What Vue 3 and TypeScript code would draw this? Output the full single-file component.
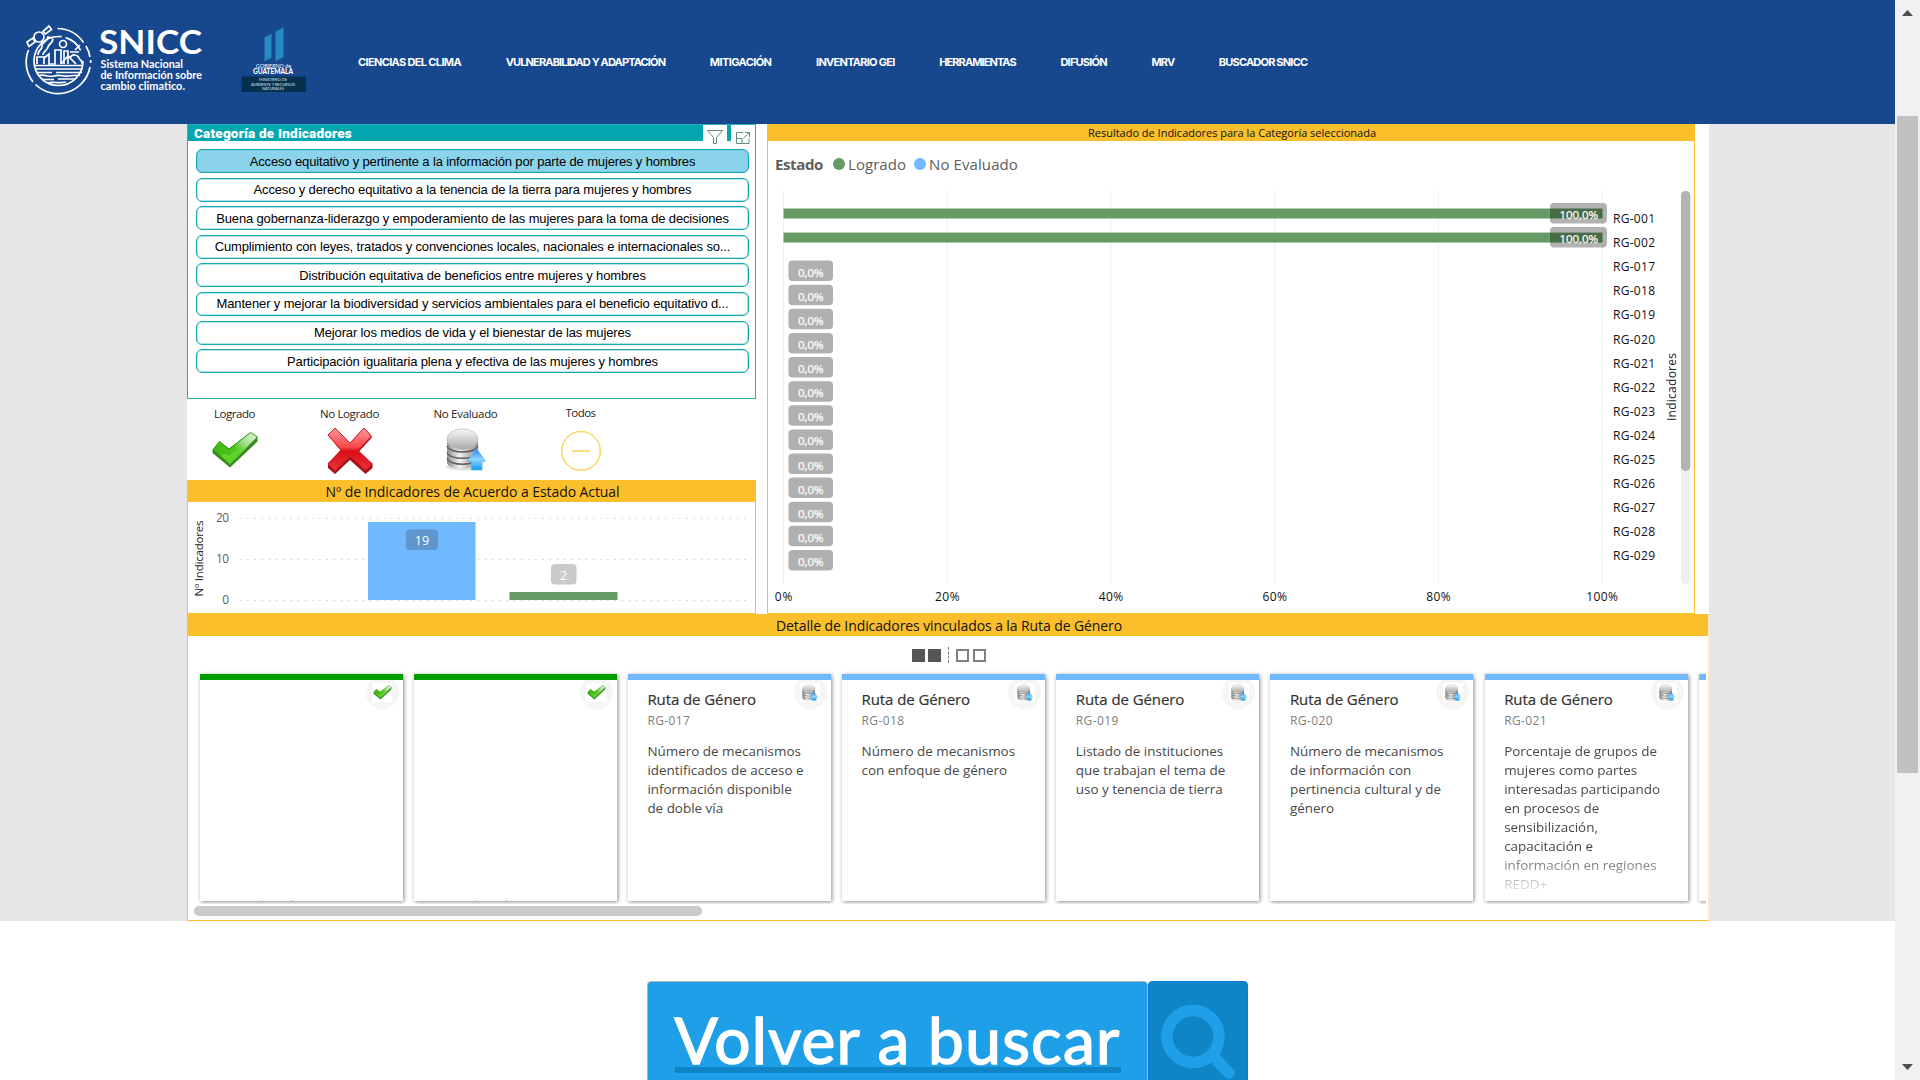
<script setup lang="ts">
interface NavItem { label: string; width: number }
interface Category { label: string; width: number; selected?: boolean }
interface Card { code?: string; lines: string[]; done?: boolean; fade?: boolean }

// Spreads or tightens the letters so that a label fills the given width.
const vFit = {
  mounted(el: HTMLElement, binding: { value: number }) {
    const natural = el.getBoundingClientRect().width
    const count = (el.textContent ?? '').trim().length
    if (binding.value && count) {
      el.style.letterSpacing = ((binding.value - natural) / count).toFixed(3) + 'px'
    }
  },
}

const nav: NavItem[] = [
  { label: 'CIENCIAS DEL CLIMA', width: 103 },
  { label: 'VULNERABILIDAD Y ADAPTACIÓN', width: 159.5 },
  { label: 'MITIGACIÓN', width: 61.5 },
  { label: 'INVENTARIO GEI', width: 78.5 },
  { label: 'HERRAMIENTAS', width: 76.5 },
  { label: 'DIFUSIÓN', width: 46.5 },
  { label: 'MRV', width: 22.5 },
  { label: 'BUSCADOR SNICC', width: 88.5 },
]

const categories: Category[] = [
  { label: 'Acceso equitativo y pertinente a la información por parte de mujeres y hombres', width: 445.5, selected: true },
  { label: 'Acceso y derecho equitativo a la tenencia de la tierra para mujeres y hombres', width: 438 },
  { label: 'Buena gobernanza-liderazgo y empoderamiento de las mujeres para la toma de decisiones', width: 512.5 },
  { label: 'Cumplimiento con leyes, tratados y convenciones locales, nacionales e internacionales so...', width: 515.5 },
  { label: 'Distribución equitativa de beneficios entre mujeres y hombres', width: 346.5 },
  { label: 'Mantener y mejorar la biodiversidad y servicios ambientales para el beneficio equitativo d...', width: 512 },
  { label: 'Mejorar los medios de vida y el bienestar de las mujeres', width: 317 },
  { label: 'Participación igualitaria plena y efectiva de las mujeres y hombres', width: 371 },
]

const indicators = ['001', '002', '017', '018', '019', '020', '021', '022', '023', '024', '025', '026', '027', '028', '029']
const ticks = [0, 20, 40, 60, 80, 100]
const tickX = (t: number) => 15.6 + t * 8.185

const cards: Card[] = [
  { done: true, lines: [] },
  { done: true, lines: [] },
  { code: 'RG-017', lines: ['Número de mecanismos', 'identificados de acceso e', 'información disponible', 'de doble vía'] },
  { code: 'RG-018', lines: ['Número de mecanismos', 'con enfoque de género'] },
  { code: 'RG-019', lines: ['Listado de instituciones', 'que trabajan el tema de', 'uso y tenencia de tierra'] },
  { code: 'RG-020', lines: ['Número de mecanismos', 'de información con', 'pertinencia cultural y de', 'género'] },
  { code: 'RG-021', fade: true, lines: ['Porcentaje de grupos de', 'mujeres como partes', 'interesadas participando', 'en procesos de', 'sensibilización,', 'capacitación e', 'información en regiones', 'REDD+'] },
  { lines: [] },
]
</script>

<template>
  <div class="page">
    <svg class="defs" width="0" height="0" aria-hidden="true">
      <defs>
        <linearGradient id="gGreen" x1="1" y1="0" x2="0" y2="0.6">
          <stop offset="0" stop-color="#eefbe8" /><stop offset="0.35" stop-color="#a4dd8c" />
          <stop offset="0.6" stop-color="#4cc41e" /><stop offset="1" stop-color="#3db80f" />
        </linearGradient>
        <linearGradient id="gRed" x1="0" y1="0" x2="0" y2="1">
          <stop offset="0" stop-color="#ff9a9a" /><stop offset="0.45" stop-color="#f8474b" />
          <stop offset="0.55" stop-color="#d90d15" /><stop offset="1" stop-color="#e8363c" />
        </linearGradient>
        <linearGradient id="gSteel" x1="0" y1="0" x2="1" y2="0">
          <stop offset="0" stop-color="#8c8c8c" /><stop offset="0.4" stop-color="#f1f1f1" /><stop offset="1" stop-color="#858585" />
        </linearGradient>
        <linearGradient id="gLid" x1="0" y1="0" x2="0" y2="1">
          <stop offset="0" stop-color="#f8f8f8" /><stop offset="1" stop-color="#a8a8a8" />
        </linearGradient>
        <linearGradient id="gUp" x1="0" y1="0" x2="0" y2="1">
          <stop offset="0" stop-color="#1f7fee" /><stop offset="0.5" stop-color="#8fd6ff" /><stop offset="1" stop-color="#0b9df5" />
        </linearGradient>
        <symbol id="ok" viewBox="0 0 48 38" preserveAspectRatio="none">
          <path d="M1.500 19 L8.500 10.500 L18 17.500 L39.500 1.500 L46.500 6 V10.500 L19 36.500 L1.500 22Z" fill="#3b8a20" />
          <path d="M2 18.500 L8.500 10.500 L18 18 L39.500 1.500 L46.500 6 L19 33.500Z" fill="url(#gGreen)" stroke="#35991a" stroke-width="1" />
          <path d="M9 24 L19 33 L36 16.500 C28 18 22 20 18 24.500 C15 22.500 12 22.500 9 24Z" fill="#69d934" opacity="0.700" />
        </symbol>
        <symbol id="no" viewBox="0 0 46 48">
          <path d="M1 8 L8 1 L23 16 L37 1 L44.500 9 V11 L31.500 25 L45.500 37 V41 L38.500 47 L23 33 L8 47 L1 41 V36 L14 24Z" fill="#a51219" />
          <path d="M1 8 L8 1 L23 16 L37 1 L44.500 9 L31 23.500 L45.500 37 L38.500 43 L23 29 L8 43.500 L1 37 L14 23Z" fill="url(#gRed)" stroke="#cf1e26" stroke-width="1" />
        </symbol>
        <symbol id="db" viewBox="0 0 40 44" preserveAspectRatio="none">
          <ellipse cx="18" cy="40" rx="18" ry="3.500" fill="#bbb" opacity="0.45" />
          <path d="M1 30v5.500c0 8 31 8 31 0V30z" fill="url(#gSteel)" /><path d="M1 31c3 8 28 8 31 0" fill="none" stroke="#5e5e5e" stroke-width="1.500" />
          <path d="M1 24v5.500c0 8 31 8 31 0V24z" fill="url(#gSteel)" /><path d="M1 25c3 8 28 8 31 0" fill="none" stroke="#5e5e5e" stroke-width="1.500" />
          <path d="M1 18v5.500c0 8 31 8 31 0V18z" fill="url(#gSteel)" /><path d="M1 18.500c3 8 28 8 31 0" fill="none" stroke="#5e5e5e" stroke-width="1.500" />
          <path d="M1 11v6c0 8 31 8 31 0v-6z" fill="url(#gSteel)" />
          <ellipse cx="16.500" cy="11.500" rx="15.500" ry="10.500" fill="url(#gLid)" stroke="#bdbdbd" stroke-width="0.800" />
          <path d="M30.500 21 L39.500 34 H36 V43 H25.500 V34 H21.500Z" fill="url(#gUp)" stroke="#5bb7f5" stroke-width="0.800" />
        </symbol>
      </defs>
    </svg>

    <div class="site">
      <header class="topbar">
        <svg class="brand" width="310" height="124" viewBox="0 0 310 124">
          <g fill="none" stroke="#fff" stroke-width="1.700">
            <path d="M57.500 28.500a32.500 32.500 0 0 1 26 14M86 46a32.500 32.500 0 0 1 4 11M90.700 60v3M90 67a32.500 32.500 0 0 1-54.500 17.500M33 82a32.500 32.500 0 0 1-4.500-32" />
            <circle cx="58.500" cy="61" r="24.500" stroke-dasharray="118 4 20 12" />
            <circle cx="39" cy="37" r="5" />
            <path d="M43 31.500 49 26l2.500 3.500-6 4.500zM27 42l6-4 2 4-6 4.500z" />
            <path d="M35 65.500h47M35 69h48M36 72.500h16M56 72.500h26M38 76c6-3 10 2 16 0s9 1 14 0 8 0 12-1M42 79.500h12M58 79h18M48 83c5-2 9 1 18-1" />
            <path d="M37 64V57h7V64M44 58l5-4v10M49 54v10h6V50h6v14M55 64V55M64 64V51h4v13" />
            <path d="M38 55c0-6 4-4 4-9s5-3 6-9l5 1M43 55c0-4 4-4 5-8s4-2 5-8" />
            <path d="M61 64 68 56l8 8M70 58c2-5 8-3 9 0s4 2 3 6M75 50l5-5M70 52h9" />
            <circle cx="63" cy="44" r="3.500" />
          </g>
          <text x="99" y="54" class="b-name" textLength="103" lengthAdjust="spacingAndGlyphs">SNICC</text>
          <g class="b-sub">
            <text x="100.500" y="67.500" textLength="82.500" lengthAdjust="spacingAndGlyphs">Sistema Nacional</text>
            <text x="100.500" y="79" textLength="101.500" lengthAdjust="spacingAndGlyphs">de Información sobre</text>
            <text x="100.500" y="90" textLength="84.500" lengthAdjust="spacingAndGlyphs">cambio climatico.</text>
          </g>
          <path d="M264.500 37l7-3v24l-7 3zM275.500 31.500l8-4V57l-8 4.500z" fill="#278ac4" />
          <text x="256" y="68" class="g-small" textLength="35" lengthAdjust="spacingAndGlyphs">GOBIERNO de</text>
          <text x="253" y="74" class="g-big" textLength="40" lengthAdjust="spacingAndGlyphs">GUATEMALA</text>
          <rect x="241.500" y="76.500" width="64.500" height="15.500" fill="#05314f" />
          <g class="g-tiny">
            <text x="259" y="81" textLength="28">MINISTERIO DE</text>
            <text x="251" y="85.500" textLength="44">AMBIENTE Y RECURSOS</text>
            <text x="262" y="90" textLength="22">NATURALES</text>
          </g>
        </svg>
        <nav class="menu">
          <span v-for="n in nav" :key="n.label" v-fit="n.width">{{ n.label }}</span>
        </nav>
      </header>

      <main class="stage">
        <div class="report">
          <div class="upper">
            <div class="left">
              <section class="slicer">
                <div class="slicer-head">
                  <b v-fit="158">Categoría de Indicadores</b>
                  <div class="tools">
                    <span><svg width="24" height="23" viewBox="0 0 24 23"><path d="M4.500 5.500h15l-6 7v6h-3v-6z" fill="none" stroke="#5f8f7c" /></svg></span>
                    <span><svg width="24" height="23" viewBox="0 0 24 23"><path d="M12 7.500H5.500v11h12.500v-5M5.500 13.500h5.500v5M14 7.500h4.500v4.500M18.500 7.500l-6 5.500" fill="none" stroke="#5f8f7c" /></svg></span>
                  </div>
                </div>
                <div class="options">
                  <div v-for="c in categories" :key="c.label" class="option" :class="{ on: c.selected }">
                    <span v-fit="c.width">{{ c.label }}</span>
                  </div>
                </div>
              </section>

              <section class="states">
                <div class="state"><span v-fit="41">Logrado</span><svg width="48" height="38"><use href="#ok" /></svg></div>
                <div class="state s-no"><span v-fit="59">No Logrado</span><svg width="46" height="48"><use href="#no" /></svg></div>
                <div class="state s-db"><span v-fit="64">No Evaluado</span><svg width="40" height="43"><use href="#db" /></svg></div>
                <div class="state s-all"><span v-fit="30">Todos</span><svg width="42" height="42" viewBox="0 0 42 42"><circle cx="21" cy="21" r="19.300" fill="none" stroke="#fcd04f" stroke-width="1.300" /><path d="M12 21h18" stroke="#fcd04f" stroke-width="1.500" /></svg></div>
              </section>

              <section class="panel count">
                <h2 class="big"><span v-fit="294">Nº de Indicadores de Acuerdo a Estado Actual</span></h2>
                <svg width="567" height="111" viewBox="188 502 567 111" class="chart">
                  <g stroke="#ccc" stroke-width="1" stroke-dasharray="1.500 5.700">
                    <path d="M240 518.500H750M240 559.500H750M240 600.500H750" />
                  </g>
                  <rect x="368" y="522" width="107.500" height="78" fill="#71b9ff" />
                  <rect x="509.500" y="592" width="108" height="8" fill="#669b66" />
                  <rect x="406" y="529.500" width="32" height="20.500" rx="4" fill="#6096cc" />
                  <rect x="551" y="564" width="25.500" height="20.500" rx="4" fill="#cacaca" />
                  <g fill="#fff" font-size="12.500" text-anchor="middle"><text x="422" y="545">19</text><text x="563.500" y="580">2</text></g>
                  <g fill="#5f5d5b" font-size="12" text-anchor="end"><text x="229" y="522" textLength="13">20</text><text x="229" y="563" textLength="13">10</text><text x="229" y="604">0</text></g>
                  <text transform="translate(203 596.500) rotate(-90)" font-size="11.500" fill="#252423" textLength="76">Nº Indicadores</text>
                </svg>
              </section>
            </div>

            <section class="panel results">
              <h2><span v-fit="288">Resultado de Indicadores para la Categoría seleccionada</span></h2>
              <div class="legend">
                <b v-fit="48">Estado</b><i class="dot green"></i><span v-fit="58">Logrado</span><i class="dot blue"></i><span v-fit="89">No Evaluado</span>
              </div>
              <svg width="926" height="425" viewBox="0 0 926 425" class="chart">
                <g stroke="#efefef"><path v-for="t in ticks" :key="t" :d="`M${tickX(t)} 3V396`" /></g>
                <g v-for="(code, i) in indicators" :key="code">
                  <template v-if="i < 2">
                    <rect x="15.500" :y="20.500 + i * 24.070" width="819" height="10" fill="#669b66" />
                    <rect x="782" :y="15 + i * 24.070" width="57" height="20.500" rx="4" fill="#000" fill-opacity="0.300" />
                    <text x="791.500" :y="31.200 + i * 24.070" class="pct" textLength="38.500">100,0%</text>
                  </template>
                  <template v-else>
                    <rect x="20.500" :y="24.300 + i * 24.120" width="44.500" height="20.500" rx="4" fill="#b0b0b0" />
                    <text x="30" :y="40.300 + i * 24.120" class="pct" textLength="25.500">0,0%</text>
                  </template>
                  <text x="845" :y="35.200 + i * 24.070" font-size="12" fill="#111" textLength="42">RG-{{ code }}</text>
                </g>
                <g font-size="12" fill="#111" text-anchor="middle">
                  <text v-for="t in ticks" :key="t" :x="tickX(t)" y="412.500" :textLength="t === 0 ? 17.500 : t === 100 ? 31.500 : 24.500">{{ t }}%</text>
                </g>
                <text transform="translate(908 233) rotate(-90)" font-size="12" fill="#252423" textLength="68">Indicadores</text>
                <rect x="913" y="3" width="9.300" height="393" rx="4.500" fill="#efefef" />
                <rect x="913" y="3" width="9.300" height="280" rx="4.500" fill="#b3b3b3" />
              </svg>
            </section>
          </div>

          <section class="panel detail">
            <h2 class="big"><span v-fit="346">Detalle de Indicadores vinculados a la Ruta de Género</span></h2>
            <div class="pager"><i class="full"></i><i class="full"></i><em></em><i></i><i></i></div>
            <div class="cards">
              <article v-for="(c, i) in cards" :key="i" class="card" :class="{ done: c.done }">
                <template v-if="i < 7">
                  <span class="badge"><span class="chip"><svg :width="c.done ? 19 : 16" :height="c.done ? 15 : 17"><use :href="c.done ? '#ok' : '#db'" /></svg></span></span>
                  <h3 :class="{ sunk: c.done }"><span v-fit="108.500">Ruta de Género</span></h3>
                  <div v-if="c.code" class="code"><span v-fit="43">{{ c.code }}</span></div>
                  <p :class="{ fade: c.fade }"><span v-for="l in c.lines" :key="l">{{ l }}</span></p>
                </template>
              </article>
            </div>
            <div class="hscroll"></div>
          </section>
        </div>
      </main>

      <section class="search">
        <a class="back"><span v-fit="446">Volver a buscar</span></a>
        <div class="go">
          <svg width="100" height="100" viewBox="0 0 100 100"><circle cx="44" cy="54.500" r="26" fill="none" stroke="#209fe9" stroke-width="11.500" /><path d="M66 76l14 15" stroke="#209fe9" stroke-width="11.500" stroke-linecap="round" /></svg>
        </div>
      </section>
    </div>

    <aside class="vscroll">
      <svg width="25" height="25" viewBox="0 0 25 25"><path d="M7 16h11l-5.500-6z" fill="#505050" /></svg>
      <div class="thumb"></div>
      <svg width="25" height="25" viewBox="0 0 25 25"><path d="M7 9h11l-5.500 6z" fill="#505050" /></svg>
    </aside>
  </div>
</template>

<style>
body { margin: 0; overflow: hidden; background: #fff; }
</style>

<style scoped>
* { box-sizing: border-box; }
.page { display: flex; width: 1920px; height: 1080px; overflow: hidden; font-family: "Open Sans", "Noto Sans", sans-serif; color: #111; }
.defs { position: absolute; }
.site { width: 1895px; height: 1080px; overflow: hidden; }
span, b { white-space: nowrap; }
.topbar { display: flex; align-items: center; height: 124px; background: #17478d; }
.brand { flex: none; }
.b-name { font: 700 33px Lato, sans-serif; fill: #fff; }
.b-sub { font: 700 10.500px Lato, sans-serif; fill: #fff; }
.g-small { font: 400 5px Lato, sans-serif; fill: #fff; }
.g-big { font: 900 6.500px Lato, sans-serif; fill: #fff; }
.g-tiny { font: 400 4px Lato, sans-serif; fill: #d5e0e8; }
.menu { display: flex; gap: 44.700px; margin-left: 48px; font: 700 11px/16px Inter, sans-serif; color: #fff; }
.menu span { display: block; }

.stage { display: flex; height: 797px; padding-left: 187px; background: #e6e6e6; }
.report { width: 1522px; background: #fff; }
.upper { display: flex; height: 490px; gap: 11px; }
.left { width: 569px; }
.slicer { height: 275px; border: 1px solid #2bb0b5; }
.slicer-head { display: flex; justify-content: space-between; height: 16px; background: #03a6ae; padding-left: 6px; color: #fff; font: 700 13.500px/16px Roboto, sans-serif; }
.slicer-head b { height: 16px; }
.tools { display: flex; gap: 4px; height: 23px; }
.tools span { width: 24px; background: #fff; }
.tools svg { display: block; }
.options { display: flex; flex-direction: column; gap: 4.600px; padding: 8px 6px 0 8px; }
.option { display: flex; align-items: center; justify-content: center; height: 24px; border: 1px solid #16a8ae; border-radius: 6px; background: #fff; font: 13px/22px "Liberation Sans", Arial, sans-serif; color: #000; box-shadow: inset 0 0 0 0.500px #6cc8cc; }
.option.on { background: #8ad3ea; }
.option span { padding-top: 1px; }

.states { display: flex; height: 81px; font-size: 11.500px; line-height: 16px; color: #252423; }
.state { display: flex; flex: none; flex-direction: column; align-items: center; width: 115.500px; padding-top: 7px; }
.state:first-child { width: 95px; }
.state svg { margin-top: 9px; }
.state.s-no { width: 135px; }
.state.s-no svg { margin-top: 5px; }
.state.s-db { width: 97px; }
.state.s-db svg { margin-top: 6px; }
.state.s-all { width: 133px; padding-top: 6px; }
.state.s-all svg { margin-top: 9px; }

.panel { border: 1px solid #fbc02d; background: #fff; }
.panel h2 { display: flex; justify-content: center; margin: 0; height: 16px; padding-left: 2px; background: #fbbf2c; font-size: 11px; line-height: 16px; font-weight: 400; color: #111; }
.panel h2.big { height: 21px; font-size: 14px; line-height: 22px; }
.count { height: 134px; }
.chart { display: block; font-family: "Open Sans", "Noto Sans", sans-serif; }
.results { width: 928px; }
.legend { display: flex; align-items: center; height: 22px; margin: 12px 0 13px 7px; font-size: 15px; line-height: 22px; color: #605e5c; }
.dot { width: 12px; height: 12px; border-radius: 50%; margin: 0 3px 0 10px; }
.dot.green { background: #669b66; }
.dot.blue { background: #71b9ff; margin-left: 8px; }
.pct { font-size: 11.500px; fill: #fff; stroke: #fff; stroke-width: 0.250px; }

.detail { height: 307px; border-right-color: #fdecc0; }
.detail h2.big { height: 20.500px; }
.pager { display: flex; align-items: center; height: 14px; margin: 12.500px 0 0 724px; }
.pager i { width: 13px; height: 13px; border: 2px solid #808080; margin-right: 4px; }
.pager i.full { background: #555; border-color: #555; margin-right: 3px; }
.pager em { height: 16px; border-left: 1px dashed #777; margin: 0 7px 0 4px; }
.cards { display: flex; gap: 11.200px; width: 1518px; height: 242px; overflow: hidden; padding: 12px 0 0 11.500px; }
.card { flex: none; position: relative; width: 203px; height: 227px; border-top: 6px solid #71b9ff; background: #fff; box-shadow: 1px 1px 4px rgba(0, 0, 0, 0.450); padding: 8px 0 0 19.500px; overflow: hidden; }
.card.done { border-top-color: #009c00; }
.badge { position: absolute; right: 4px; top: -4px; display: flex; align-items: center; justify-content: center; width: 33px; height: 33px; border-radius: 50%; background: #f5f5f5; }
.chip { display: flex; align-items: center; justify-content: center; width: 20px; height: 19px; background: #fff; }
.card h3 { margin: 0; font-size: 15px; line-height: 22px; font-weight: 500; color: #333; -webkit-text-stroke: 0.200px #333; }
.card h3.sunk { padding-top: 206px; color: #bbb; -webkit-text-stroke: 0; }
.code { padding-top: 1px; font-size: 12px; line-height: 20px; color: #808080; }
.card p { display: flex; flex-direction: column; margin: 11px 0 0; font-size: 13.450px; line-height: 19.050px; color: #484848; }
.card p.fade { -webkit-mask-image: linear-gradient(#000 108px, rgba(0, 0, 0, 0.100) 150px); mask-image: linear-gradient(#000 108px, rgba(0, 0, 0, 0.100) 150px); }
.hscroll { width: 508px; height: 10px; margin: 2px 0 0 6px; border-radius: 5px; background: #cacaca; }

.search { display: flex; padding: 60px 0 0 647px; }
.back { width: 501px; height: 130px; border: 1px solid #b5b5b5; border-radius: 4px 4px 0 0; background: #209fe9; padding: 16px 0 0 26.500px; color: #fff; font: 400 64px/84px Lato, sans-serif; }
.back span { display: inline-block; height: 75px; border-bottom: 6px solid #0f85c6; -webkit-text-stroke: 1.500px #fff; }
.go { width: 100px; height: 130px; border: 1px solid #0a78e0; border-radius: 4px 4px 0 0; background: #0f85c6; }

.vscroll { display: flex; flex-direction: column; justify-content: space-between; width: 25px; height: 1080px; background: #f1f1f1; }
.vscroll .thumb { width: 21px; height: 657px; margin: 91px auto auto 2px; background: #c1c1c1; }
</style>
